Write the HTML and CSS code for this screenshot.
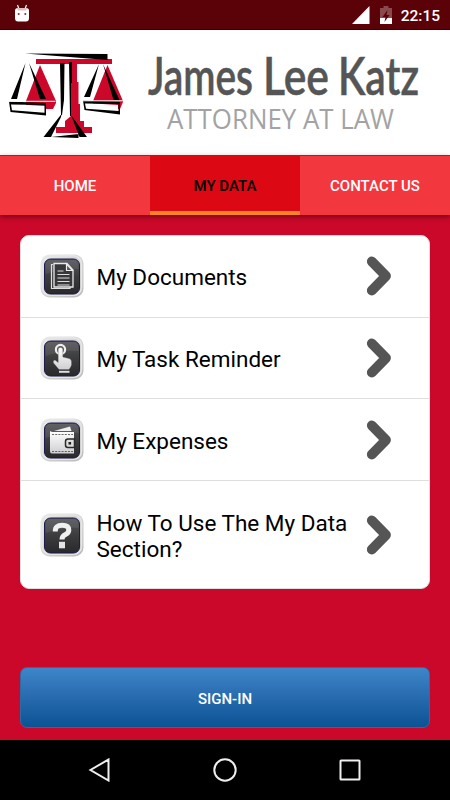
FILE: index.html
```html
<!DOCTYPE html>
<html lang="en">
<head>
  <meta charset="UTF-8" />
  <meta name="viewport" content="width=device-width, initial-scale=1.0"/>
  <title>James Lee Katz - Attorney at Law</title>
  <link rel="stylesheet" href="styles.css">
</head>
<body>
  <!-- Shared shapes -->
  <svg class="defs" width="0" height="0">
    <defs>
      <linearGradient id="frame" x1="0" y1="0" x2="1" y2="1">
        <stop offset="0" stop-color="#eeeeee"/>
        <stop offset="0.5" stop-color="#d4d4d4"/>
        <stop offset="1" stop-color="#b8b8b8"/>
      </linearGradient>
      <linearGradient id="face" x1="0" y1="0" x2="0" y2="1">
        <stop offset="0" stop-color="#55565a"/>
        <stop offset="0.5" stop-color="#3c3c3e"/>
        <stop offset="1" stop-color="#29292b"/>
      </linearGradient>
      <linearGradient id="silver" x1="0" y1="0" x2="0" y2="1">
        <stop offset="0" stop-color="#ffffff"/>
        <stop offset="1" stop-color="#cfcfd3"/>
      </linearGradient>
      <symbol id="tile" viewBox="0 0 44 44">
        <rect x="0.5" y="0.5" width="43" height="43" rx="9" fill="url(#frame)"/>
        <rect x="2" y="1.800" width="39.500" height="39.500" rx="8" fill="none" stroke="#e6e6e6" stroke-width="1.600"/>
        <rect x="4.500" y="5" width="35" height="35" rx="6" fill="url(#face)" stroke="#1c1b4c"/>
        <path d="M5.500 20V11Q5.500 6 10.500 6H33.500Q38.500 6 38.500 11V15Q24 14 5.500 20Z" fill="#fff" opacity="0.08"/>
      </symbol>
      <symbol id="chevron" viewBox="0 0 26 40">
        <path d="M5.800 5.500L20 20L5.800 34.500" fill="none" stroke="#555" stroke-width="9.800" stroke-linecap="round" stroke-linejoin="round"/>
      </symbol>
    </defs>
  </svg>

  <div class="screen">
    <div class="status-bar">
      <svg class="robot" width="16" height="18" viewBox="0 0 16 18">
        <path d="M3.500 1L5 5M12.500 1L11 5" stroke="#fff" stroke-width="1.200"/>
        <path d="M1 6.500Q1 4 4 4H12Q15 4 15 6.500V14Q15 17.500 12 17.500H4Q1 17.500 1 14Z" fill="#fff"/>
        <path d="M2.500 4H13.500L12 6.500H4Z" fill="#dcc0c2"/>
        <circle cx="4.700" cy="10" r="1" fill="#7b3035"/>
        <circle cx="11.300" cy="10" r="1" fill="#7b3035"/>
      </svg>
      <div class="status-right">
        <svg width="18" height="18" viewBox="0 0 18 18"><path d="M17.500 0V18H0Z" fill="#fff"/></svg>
        <svg class="battery" width="12" height="18" viewBox="0 0 12 18">
          <path d="M3.500 0H8.500V2H12V18H0V2H3.500Z" fill="#8a494d"/>
          <path d="M0 12H12V18H0Z" fill="#fff"/>
          <path d="M7.500 4L2.500 11H5.500L4.500 16L9.500 9H6.500Z" fill="#5a0207"/>
        </svg>
        <span class="clock">22:15</span>
      </div>
    </div>

    <header class="header">
      <svg width="450" height="125" viewBox="0 30 450 125">
        <!-- Scales -->
        <g fill="#cb0829">
          <path d="M36 59H112V64H77V82H78.500V104H80V121H84V127H92V133H56V127H65V121L71 116V64H36Z"/>
          <path d="M40 65L56 101V103L53 109H26V101Z"/>
          <path d="M107.500 65L123 101V102L120 109H93V101Z"/>
        </g>
        <path d="M25 53.500L107.500 54V60Z"/>
        <path d="M60 63H64.500L64 100L62 115H61ZM69 62H72V83H71L71 116H70Z"/>
        <path d="M61.500 114L61 117L51 137H43.500ZM71 115L87 137H79.500ZM51 137L78.500 134V138Z"/>
        <path d="M25.500 63L17 99H11ZM29 63L46 99H40ZM99 64L90 97H84ZM103 64L119.500 100H113.500Z"/>
        <!-- Pans -->
        <path d="M12 104L45 106V114L12 110ZM86 103L118 105V112L86 109Z" fill="#fff"/>
        <path d="M9 101.500L46 103V115.500L10.500 112ZM11 104.500L12 110.200L44.500 112.700V105ZM83 100.500L120 102V114.500L84.500 110ZM85 103.500L86 108.700L118.500 111V104Z" fill-rule="evenodd"/>
        <path d="M9 101.300H55.500M83 100.800H123" stroke="#fff"/>
        <text class="logo-name" y="94.500">
          <tspan x="148" textLength="105" lengthAdjust="spacingAndGlyphs">James</tspan>
          <tspan x="263" textLength="66" lengthAdjust="spacingAndGlyphs">Lee</tspan>
          <tspan x="338" textLength="81" lengthAdjust="spacingAndGlyphs">Katz</tspan>
        </text>
        <text class="logo-sub" x="167" y="128.500" textLength="227" lengthAdjust="spacingAndGlyphs">ATTORNEY AT LAW</text>
      </svg>
    </header>

    <nav class="tabs">
      <div class="tab">HOME</div>
      <div class="tab active">MY DATA</div>
      <div class="tab">CONTACT US</div>
    </nav>

    <main class="content">
      <div class="card">
        <div class="row">
          <svg class="icon" viewBox="0 0 44 44">
            <use href="#tile"/>
            <path d="M13 10.500H11.500V34.500H30V33" fill="none" stroke="#ddd" stroke-width="1.200"/>
            <path d="M14 9.500H27L33 16V33H14Z" fill="#38383a" stroke="#e8e8e8" stroke-width="1.300"/>
            <path d="M26.500 10V16.500H32.500Z" fill="#555" stroke="#eee" stroke-width="1.200"/>
            <path d="M17.500 17H23.500M17.500 20.500H29.500M17.500 24H29.500M17.500 27.500H29.500M17.500 31H29.500" stroke="#ddd" stroke-width="1.200"/>
          </svg>
          <span class="label">My Documents</span>
          <svg class="chevron"><use href="#chevron"/></svg>
        </div>
        <div class="row">
          <svg class="icon" viewBox="0 0 44 44">
            <use href="#tile"/>
            <circle cx="20.500" cy="13.500" r="4.600" fill="none" stroke="#eee" stroke-width="2.200"/>
            <path d="M18.200 13.500Q18.200 11.500 20.500 11.500T22.800 13.500V21L29 22.500Q31.500 23 31.500 26V29Q31 31 29 33.500H19L13.500 27Q12.500 24.500 15 24L18.200 26.500Z" fill="url(#silver)" stroke="#555" stroke-width="0.300"/>
            <path d="M19 34.800H29.500V36.800H19Z" fill="#ddd"/>
          </svg>
          <span class="label">My Task Reminder</span>
          <svg class="chevron"><use href="#chevron"/></svg>
        </div>
        <div class="row">
          <svg class="icon" viewBox="0 0 44 44">
            <use href="#tile"/>
            <path d="M14 13L30 8.500L31.500 13Z" fill="#eee"/>
            <path d="M10 13Q11 14 13 14H34V35.500H12Q10 35.500 10 33Z" fill="url(#silver)"/>
            <path d="M12 16.500H33M12 33.500H33" stroke="#555" stroke-width="0.900" stroke-dasharray="2 1.200"/>
            <path d="M34.500 21H28Q25.500 21 25.500 23.500V27Q25.500 29.500 28 29.500H34.500Z" fill="#ddd" stroke="#29292b" stroke-width="1.500"/>
            <rect x="28.500" y="24" width="2.600" height="2.600" fill="#222"/>
          </svg>
          <span class="label">My Expenses</span>
          <svg class="chevron"><use href="#chevron"/></svg>
        </div>
        <div class="row tall">
          <svg class="icon" viewBox="0 0 44 44">
            <use href="#tile"/>
            <path d="M15.300 18.500Q15 12.200 22.200 12.200Q28.800 12.200 28.800 17Q28.800 20 25.500 21.500Q22 23 22 26.500" fill="none" stroke="#f0f0f0" stroke-width="5"/>
            <rect x="19" y="28.800" width="6" height="6.500" fill="#e4e4e4"/>
          </svg>
          <span class="label">How To Use The My Data Section?</span>
          <svg class="chevron"><use href="#chevron"/></svg>
        </div>
      </div>

      <button class="sign-in">SIGN-IN</button>
    </main>

    <footer class="nav-bar">
      <svg width="24" height="24" viewBox="0 0 24 24"><path d="M20.500 1.500V22.500L2.500 12Z"/></svg>
      <svg width="24" height="24" viewBox="0 0 24 24"><circle cx="12" cy="12" r="10.700"/></svg>
      <svg width="24" height="24" viewBox="0 0 24 24"><rect x="2.500" y="2.500" width="19" height="19" rx="0.500"/></svg>
    </footer>
  </div>
</body>
</html>
```
FILE: styles.css
```css
body {
  margin: 0;
  font-family: Roboto, sans-serif;
}

.defs {
  display: block;
}

.screen {
  width: 450px;
  height: 800px;
  display: flex;
  flex-direction: column;
  overflow: hidden;
  background: #cb0829;
}

.status-bar {
  box-sizing: border-box;
  height: 30px;
  padding: 0 10px 0 14px;
  display: flex;
  align-items: center;
  justify-content: space-between;
  background: #5a0207;
  border-bottom: 1px solid #3c0003;
}

.robot {
  margin-top: -3px;
}

.status-right {
  display: flex;
  align-items: center;
  gap: 10px;
}

.clock {
  color: #fff;
  font-size: 15.5px;
  font-weight: 500;
  line-height: 30px;
  margin-left: -1px;
  padding-top: 2px;
}

.header {
  height: 125px;
  background: #fff;
}

.header svg {
  display: block;
  overflow: visible;
}

.logo-name {
  font-family: Lato, sans-serif;
  font-size: 51px;
  font-weight: 600;
  fill: #555;
  stroke: #555;
  stroke-width: 0.5px;
}

.logo-sub {
  font-family: "Open Sans", sans-serif;
  font-size: 27.5px;
  fill: #a3a3a3;
}

.tabs {
  box-sizing: border-box;
  height: 60px;
  display: grid;
  grid-template-columns: repeat(3, 1fr);
  background: #f2373f;
  border-top: 1px solid #dc0914;
  box-shadow: 0 2px 5px rgba(0, 0, 0, 0.4);
}

.tab {
  display: flex;
  align-items: center;
  justify-content: center;
  padding-top: 1px;
  color: #fff;
  font-size: 15px;
  font-weight: 500;
}

.tab.active {
  background: #dc0914;
  color: #000;
  padding-top: 5px;
  border-bottom: 4px solid #f98420;
}

.content {
  flex: 1;
  display: flex;
  flex-direction: column;
  justify-content: space-between;
  padding: 20px 20px 12px;
}

.card {
  box-sizing: border-box;
  height: 354px;
  background: #fff;
  border: 1px solid #dedede;
  border-radius: 9px;
}

.row {
  box-sizing: border-box;
  height: 81.7px;
  display: flex;
  align-items: center;
  padding: 0 37px 0 19px;
  border-bottom: 1.5px solid #dedede;
}

.row.tall {
  height: 107px;
  border-bottom: none;
}

.icon {
  width: 44px;
  height: 44px;
  flex: none;
}

.label {
  flex: 1;
  margin-left: 12.5px;
  font-size: 22.5px;
  line-height: 26px;
  padding-top: 2px;
  color: #000;
}

.chevron {
  width: 26px;
  height: 40px;
  flex: none;
}

.sign-in {
  height: 61px;
  padding-top: 3px;
  border: 1px solid #2d6ba6;
  border-radius: 7px;
  background: linear-gradient(#3d86ca, #2a6db0 45%, #0b5394);
  color: #fff;
  font-family: Roboto, sans-serif;
  font-size: 15px;
  font-weight: 500;
}

.nav-bar {
  height: 60px;
  display: flex;
  align-items: center;
  justify-content: center;
  gap: 101px;
  background: #000;
}

.nav-bar svg {
  fill: none;
  stroke: #eee;
  stroke-width: 2;
}
```
